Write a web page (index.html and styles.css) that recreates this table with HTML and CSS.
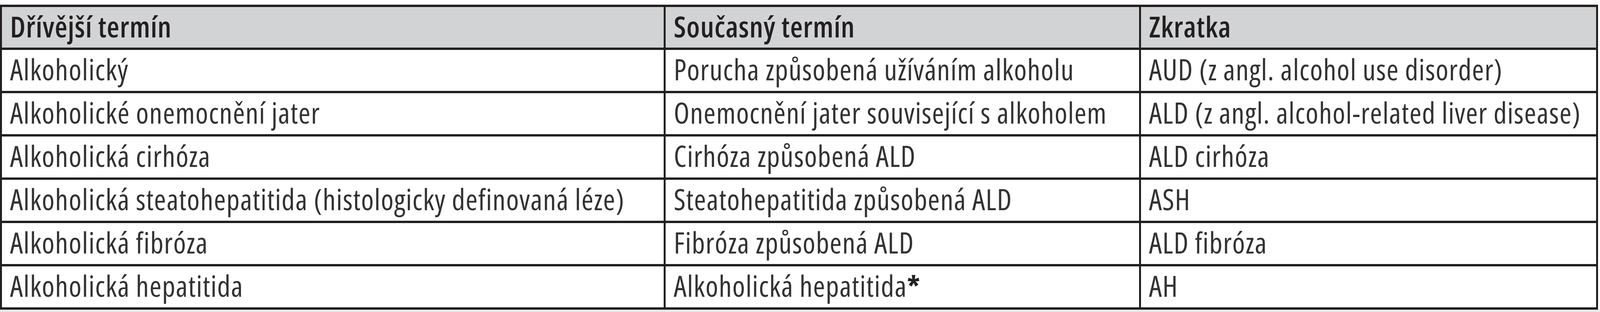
FILE: index.html
```html
<!DOCTYPE html>
<html lang="cs">
<head>
<meta charset="utf-8">
<title>Terminologie ALD</title>
<link rel="stylesheet" href="styles.css">
</head>
<body>
<div class="sheet">
  <table class="terms">
    <colgroup>
      <col class="c-old">
      <col class="c-new">
      <col class="c-abbr">
    </colgroup>
    <thead>
      <tr>
        <th>Dřívější termín</th>
        <th>Současný termín</th>
        <th>Zkratka</th>
      </tr>
    </thead>
    <tbody>
      <tr>
        <td>Alkoholický</td>
        <td>Porucha způsobená užíváním alkoholu</td>
        <td>AUD (z angl. alcohol use disorder)</td>
      </tr>
      <tr>
        <td>Alkoholické onemocnění jater</td>
        <td>Onemocnění jater související s alkoholem</td>
        <td>ALD (z angl. alcohol-related liver disease)</td>
      </tr>
      <tr>
        <td>Alkoholická cirhóza</td>
        <td>Cirhóza způsobená ALD</td>
        <td>ALD cirhóza</td>
      </tr>
      <tr>
        <td>Alkoholická steatohepatitida (histologicky definovaná léze)</td>
        <td>Steatohepatitida způsobená ALD</td>
        <td>ASH</td>
      </tr>
      <tr>
        <td>Alkoholická fibróza</td>
        <td>Fibróza způsobená ALD</td>
        <td>ALD fibróza</td>
      </tr>
      <tr>
        <td>Alkoholická hepatitida</td>
        <td>Alkoholická hepatitida<span class="mark">*</span></td>
        <td>AH</td>
      </tr>
    </tbody>
  </table>
</div>
</body>
</html>
```

FILE: styles.css
```css
:root {
  /* one reference pixel of width: the table spans the full window width */
  --u: calc(100vw / 4733);
}

html {
  background: #e8e8e8;
}

body {
  margin: 0;
  width: 100vw;
  overflow: hidden;
}

.sheet {
  background: #ffffff;
  padding-top: 12px;
}

.terms {
  table-layout: fixed;
  width: calc(4727 * var(--u));
  border-collapse: separate;
  border-spacing: calc(6 * var(--u)) 6px;
  background: #231f20;
  font-family: "Open Sans", "Noto Sans", "Liberation Sans", sans-serif;
  font-stretch: 75%;
  font-size: 74px;
  letter-spacing: 0.02em;
  color: #231f20;
}

.c-old { width: calc(1957 * var(--u)); }
.c-new { width: calc(1400 * var(--u)); }
.c-abbr { width: calc(1346 * var(--u)); }

.terms th,
.terms td {
  box-sizing: border-box;
  padding: 0 calc(24 * var(--u)) 5px;
  text-align: left;
  vertical-align: top;
  white-space: nowrap;
  line-height: 100px;
}

.terms th {
  height: 104px;
  padding-bottom: 4px;
  background: #d1d3d4;
  font-weight: 600;
  letter-spacing: 0.015em;
}

.terms td {
  height: 105px;
  background: #ffffff;
  font-weight: 400;
  color: #333132;
}

.mark {
  font-weight: 700;
  color: #231f20;
}
```
